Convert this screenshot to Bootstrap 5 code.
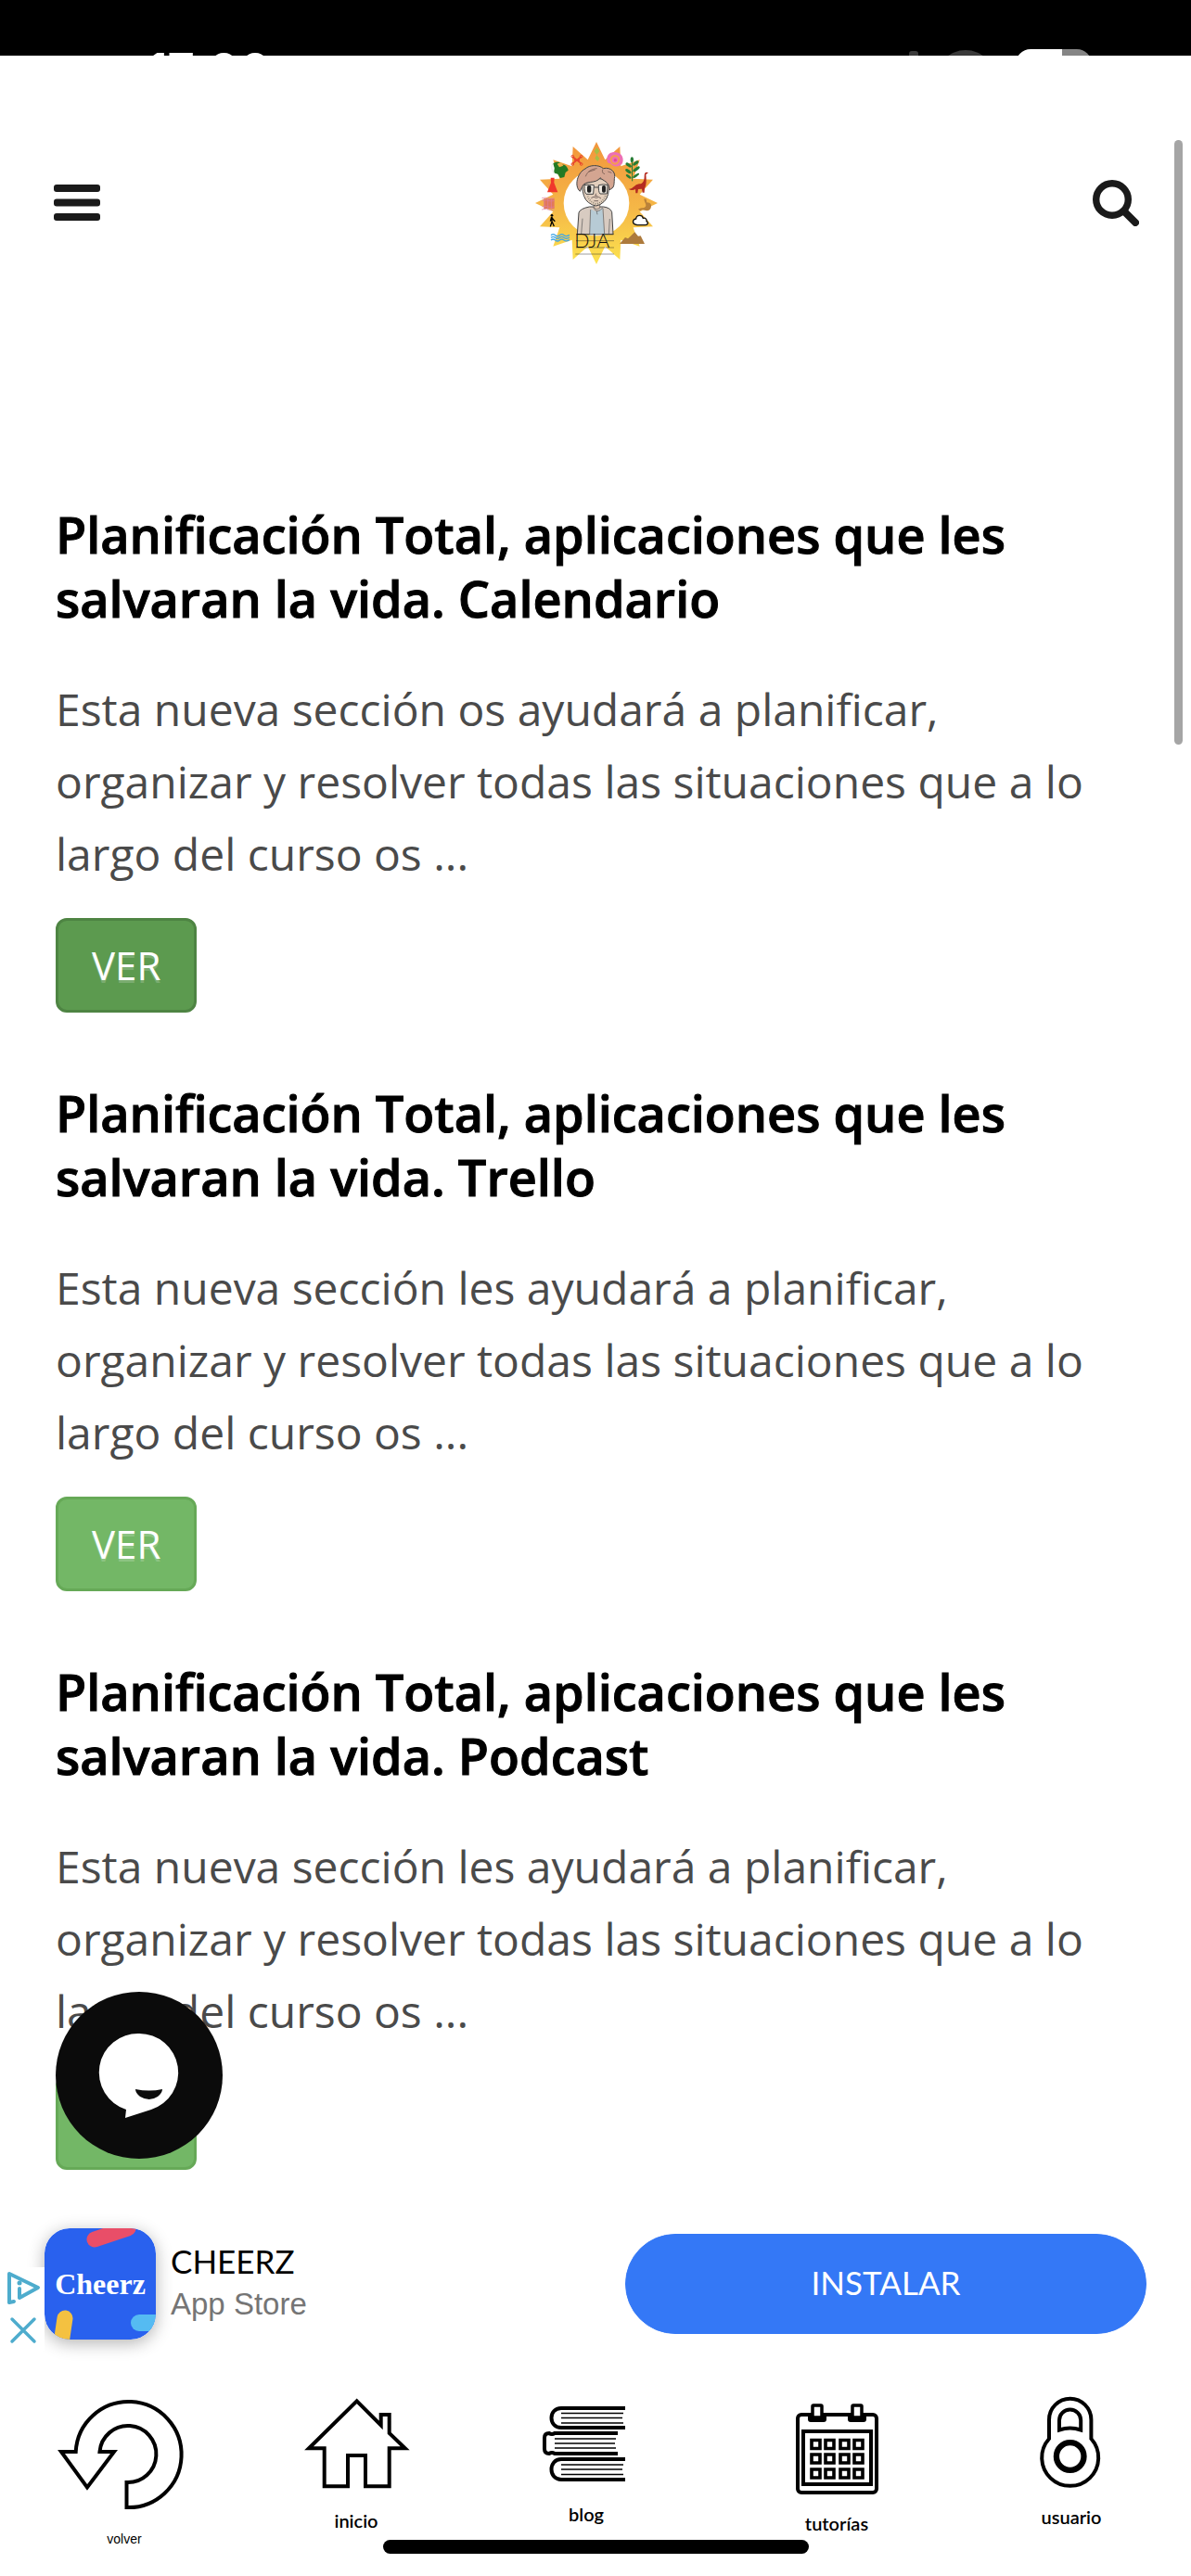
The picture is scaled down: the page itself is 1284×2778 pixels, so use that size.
<!DOCTYPE html>
<html lang="es">
<head>
<meta charset="utf-8">
<meta name="viewport" content="width=device-width, initial-scale=1">
<title>DJA - Planificación Total</title>
<link href="https://cdn.jsdelivr.net/npm/bootstrap@5.3.0/dist/css/bootstrap.min.css" rel="stylesheet">
<style>
  body { font-family: "Open Sans", "Noto Sans", sans-serif; background: #fff; color: #000; }
  svg { display: block; }
  .status-strip { height: 60px; background: #000; color: #fff; padding: 0 108px 0 159px; }
  .status-time { font-family: Inter, sans-serif; font-weight: 600; font-size: 51px; line-height: 60px; padding-top: 46px; }
  .site-header { padding: 93px 56px 93px 58px; }
  .scroll-thumb { position: fixed; top: 151px; right: 9px; width: 9px; height: 652px; border-radius: 5px; background: #a5a5a5; }
  .feed { padding: 164px 60px 45px; }
  .entry { margin-bottom: 74px; }
  .entry:last-child { margin-bottom: 0; }
  .entry-title { font-size: 54px; line-height: 69px; font-weight: 600; -webkit-text-stroke: 1px #000; margin-bottom: 46px; }
  .entry-text { font-size: 48px; line-height: 78px; color: #4a4a4a; margin-bottom: 30px; }
  .btn-ver {
    --bs-btn-color: #fff; --bs-btn-bg: #73b766; --bs-btn-border-color: #66a957;
    --bs-btn-hover-color: #fff; --bs-btn-hover-bg: #5c9a4f; --bs-btn-hover-border-color: #4e8443;
    --bs-btn-active-color: #fff; --bs-btn-active-bg: #5c9a4f; --bs-btn-active-border-color: #4e8443;
    --bs-btn-border-width: 3px; --bs-btn-border-radius: 12px;
    --bs-btn-padding-x: 36px; --bs-btn-padding-y: 18px;
    --bs-btn-font-size: 42px; --bs-btn-line-height: 60px;
    display: block; width: fit-content; text-shadow: 0 3px 0 rgba(255,255,255,.2);
  }
  .chat-bubble { position: fixed; left: 60px; bottom: 450px; width: 180px; height: 180px; border-radius: 50%; background: #0b0b0b; }
  .ad-strip { height: 150px; padding: 0 48px; }
  .ad-corner { position: absolute; left: 0; top: 57px; width: 48px; height: 90px; }
  .app-tile { border-radius: 27px; box-shadow: 0 4px 18px rgba(0,0,0,.3); }
  .app-name { font-family: Lato, sans-serif; font-size: 35px; line-height: 44px; }
  .app-store { font-family: "Liberation Sans", sans-serif; font-size: 33px; line-height: 50px; color: #757575; }
  .btn-install {
    --bs-btn-color: #fff; --bs-btn-bg: #3478f6; --bs-btn-border-color: #3478f6;
    --bs-btn-hover-color: #fff; --bs-btn-hover-bg: #2a68dc; --bs-btn-hover-border-color: #2a68dc;
    --bs-btn-padding-y: 0;
    font-family: Lato, sans-serif; font-size: 35px; width: 562px; height: 108px; padding-bottom: 4px;
  }
  .tab-row { display: grid; grid-template-columns: 268fr 232fr 264fr 276fr 230fr; padding: 42px 14px 28px 0; min-height: 240px; align-items: start; }
  .tab-link { color: #000; text-decoration: none; font-family: Lato, sans-serif; font-weight: 600; font-size: 20px; line-height: 24px; }
  .tab-small { font-family: "Liberation Sans", sans-serif; font-weight: 400; font-size: 14px; }
  .home-bar { position: fixed; left: 50%; bottom: 24px; width: 459px; height: 15px; margin-left: -229px; border-radius: 8px; background: #000; }
</style>
</head>
<body>
<div class="d-flex flex-column min-vh-100">
  <div class="status-strip d-flex justify-content-between overflow-hidden" aria-hidden="true">
    <span class="status-time">17:00</span>
    <svg width="200" height="60" viewBox="976 0 200 60">
      <rect x="980" y="55" width="10" height="20" rx="3" fill="#3a3a3a"/>
      <circle cx="1041" cy="86" r="32" fill="#3a3a3a"/>
      <path d="M1145 53h-34a16 16 0 0 0-16 16h50z" fill="#fff"/>
      <path d="M1145 53h16a16 16 0 0 1 16 16h-32z" fill="#858585"/>
    </svg>
  </div>

  <header class="site-header d-flex align-items-center justify-content-between">
    <button type="button" class="btn p-0 border-0" aria-label="Menú">
      <svg width="50" height="40" viewBox="0 0 50 40" fill="#1a1a1a"><rect width="50" height="8" rx="3"/><rect y="15.500" width="50" height="8" rx="3"/><rect y="31" width="50" height="8" rx="3"/></svg>
    </button>
    <a href="#" aria-label="DJA">
      <svg width="132" height="132" viewBox="48 38 396 396">
        <defs><linearGradient id="sol" x1="0" y1="0" x2="0" y2="1"><stop offset="0" stop-color="#f2953c"/><stop offset=".55" stop-color="#f5b847"/><stop offset="1" stop-color="#fce34f"/></linearGradient></defs>
        <path fill="url(#sol)" d="M246 38L274 96 322 53 325 117 386 96 365 157 429 160 386 208 444 236 386 264 429 312 365 315 386 376 325 355 322 419 274 376 246 434 218 376 170 419 167 355 106 376 127 315 63 312 106 264 48 236 106 208 63 160 127 157 106 96 167 117 170 53 218 96Z"/>
        <circle cx="246" cy="236" r="106" fill="#fff"/>
        <path d="M247 56l9 12-9 12 9 12-6 9-9-9 6-12-8-12z" fill="#a7bd45"/>
        <path d="M169 86l28 22M197 86l-28 22M174 97h18" stroke="#e8452e" stroke-width="5" fill="none"/><g fill="none" stroke="#e8452e" stroke-width="3"><circle cx="169" cy="85" r="4"/><circle cx="197" cy="85" r="4"/><circle cx="169" cy="110" r="4"/><circle cx="197" cy="110" r="4"/></g>
        <path d="M280 91c2-19 22-23 36-18 16 5 20 25 12 37-12 12-30 8-36-2-10 0-13-7-12-17z" fill="#ed70b4"/><circle cx="306" cy="96" r="13" fill="none" stroke="#f49c50" stroke-width="6"/><circle cx="307" cy="97" r="5" fill="#e6439b"/>
        <path d="M106 108c15-9 28-3 27 4 12-3 20 8 22 18l-9 7-4 15-13 3-8-13-10-3c-5-8 2-14-2-20z" fill="#247a24"/><path d="M119 109l12-5 8 11-13 5z" fill="#efb04a"/><path d="M104 109c-6 14 1 29 7 32" fill="none" stroke="#ddd" stroke-width="2"/>
        <path d="M362 165c-1-25 0-48-1-70" stroke="#277d35" stroke-width="3"/><g fill="#277d35"><ellipse cx="361" cy="96" rx="5" ry="9"/><ellipse cx="350" cy="113" rx="11" ry="5" transform="rotate(35 350 113)"/><ellipse cx="373" cy="107" rx="11" ry="5" transform="rotate(-35 373 107)"/><ellipse cx="349" cy="133" rx="11" ry="5" transform="rotate(35 349 133)"/><ellipse cx="375" cy="126" rx="13" ry="5" transform="rotate(-35 375 126)"/><ellipse cx="350" cy="150" rx="10" ry="4" transform="rotate(35 350 150)"/><ellipse cx="374" cy="147" rx="12" ry="4" transform="rotate(-35 374 147)"/></g>
        <path d="M350 190c14 2 19-14 34-16 14 0 17-12 17-25 0-12 5-15 13-11l-8 6c2 18 2 35-4 44l-1 14h-6l-2-12-12 1-2 13h-6l-1-13c-7 5-16 4-22-1z" fill="#b52c20"/>
        <path d="M98 154h12l-1 16 12 31H87l12-31z" fill="#f0382c"/><path d="M94 172l-5 12" stroke="#f78b6d" stroke-width="2"/>
        <rect x="76" y="222" width="34" height="32" fill="#e2785a"/><path d="M69 220c22-5 19 5 41 0M69 228c22-5 19 5 41 0M69 248c22-5 19 5 41 0M69 257c22-5 19 5 41 0M78 220v37M89 220v37M100 220v37" stroke="#dd81a5" stroke-width="2" fill="none"/>
        <path d="M400 222l7 1 2 11c14 0 17 10 12 20-6 10-18 6-26 3l-7 4-7-5c10-8 23-1 25-12 0-7-6-13-6-22z" fill="#ba8239"/>
        <circle cx="102" cy="276" r="4"/><path d="M101 281l6 9 5 5M101 281l-4 14M102 282v14l-5 16M102 295l7 16" stroke="#000" stroke-width="4" fill="none"/>
        <path d="M371 305c-10-4-8-17 3-18 1-14 20-14 23-2 8-2 13 5 11 10 9 6 2 12-5 12h-25z" fill="#fff" stroke="#111" stroke-width="4"/>
        <path d="M99 340q7-6 14 0t14 0 14 0 18-1M99 348q7-6 14 0t14 0 14 0 18-1M99 356q7-6 14 0t14 0 14 0 18-1" fill="none" stroke="#43a7e6" stroke-width="4"/>
        <path d="M321 368l18-21 9 4 22-21 11 13 8-1 13 26z" fill="#ad7a3c"/>
        <path d="M184 337l5-70q4-13 34-19h46q22 3 27 17l4 72z" fill="#d8cbc1" stroke="#444" stroke-width="3"/>
        <path d="M224 337l4-82q20 18 37-4l7 86z" fill="#b7cbd5"/><path d="M224 337l3-80M272 337l-5-84M236 250q8 14 13 12 9 0 17-11M197 336l4-50M286 336l3-49M247 263l2 10" fill="none" stroke="#555" stroke-width="2"/>
        <path d="M238 232v20q10 8 19 0v-20z" fill="#dfc6b3" stroke="#555" stroke-width="2"/>
        <path d="M200 178q1 42 20 56 12 9 24 11 14-1 27-14 18-16 15-62-22-17-48-10z" fill="#e3cfbd" stroke="#444" stroke-width="3"/>
        <path d="M193 198c-20-16-9-61 17-73 13-13 44-14 58-1 27-6 42 15 36 33-1 25-1 29-16 36-1-28-20-28-30-39-13 22-49 6-58 29z" fill="#d4a591" stroke="#444" stroke-width="3"/>
        <path d="M211 150c6-17 20-25 37-26M220 135l22-7M266 127q-3 13 7 15M283 134l12 4" fill="none" stroke="#624a43" stroke-width="2"/>
        <path d="M207 178q17-4 31 0l-2 29h-23q-7-5-6-29zM253 178q15-4 29-1l-2 29h-22q-6-6-5-28zM238 185h15" fill="#eee8df" stroke="#444" stroke-width="3"/>
        <rect x="216" y="179" width="13" height="23" rx="5" fill="#222"/><rect x="264" y="179" width="12" height="23" rx="5" fill="#222"/>
        <path d="M218 214q5 17 27 25 22-5 30-26" fill="none" stroke="#665" stroke-width="5" stroke-dasharray="2 5"/><path d="M229 220q8-8 16-1 9-6 16 2M238 229h14M245 205l-3 8h8" fill="none" stroke="#433" stroke-width="2"/>
        <path d="M180 337h123M180 358h123M180 380h123M178 401h125" stroke="#222" stroke-width="2" opacity=".65"/>
        <text x="175" y="380" font-family="Lato, sans-serif" font-weight="300" font-size="64" fill="#111">DJA</text>
      </svg>
    </a>
    <button type="button" class="btn p-0 border-0" aria-label="Buscar">
      <svg width="50" height="50" viewBox="0 0 50 50" fill="none" stroke="#1a1a1a"><circle cx="21" cy="21" r="17.300" stroke-width="7.400"/><path d="M34 34l12 12" stroke-width="8" stroke-linecap="round"/></svg>
    </button>
  </header>

  <main class="feed">
    <article class="entry">
      <h2 class="entry-title">Planificación Total, aplicaciones que les salvaran la vida. Calendario</h2>
      <p class="entry-text">Esta nueva sección os ayudará a planificar, organizar y resolver todas las situaciones que a lo largo del curso os ...</p>
      <a href="#" class="btn btn-ver active">VER</a>
    </article>
    <article class="entry">
      <h2 class="entry-title">Planificación Total, aplicaciones que les salvaran la vida. Trello</h2>
      <p class="entry-text">Esta nueva sección les ayudará a planificar, organizar y resolver todas las situaciones que a lo largo del curso os ...</p>
      <a href="#" class="btn btn-ver">VER</a>
    </article>
    <article class="entry">
      <h2 class="entry-title">Planificación Total, aplicaciones que les salvaran la vida. Podcast</h2>
      <p class="entry-text">Esta nueva sección les ayudará a planificar, organizar y resolver todas las situaciones que a lo largo del curso os ...</p>
      <a href="#" class="btn btn-ver">VER</a>
    </article>
  </main>

  <footer class="mt-auto bg-white">
    <aside class="ad-strip position-relative d-flex align-items-center" aria-label="Anuncio">
      <div class="ad-corner bg-white">
        <svg width="48" height="90" viewBox="0 0 48 90" fill="none" stroke="#4eaccd" stroke-width="4" stroke-linecap="round" stroke-linejoin="round">
          <path d="M15 37l-5 1V7l31 15-20 11V23"/><circle cx="21" cy="17" r="2.500" fill="#4eaccd" stroke="none"/><path d="M13 56l24 24M37 56L13 80" stroke-width="3.500"/>
        </svg>
      </div>
      <svg class="app-tile flex-shrink-0" width="120" height="120" viewBox="0 0 120 120">
        <defs><clipPath id="tile"><rect width="120" height="120" rx="27"/></clipPath></defs>
        <g clip-path="url(#tile)">
          <rect width="120" height="120" fill="#2961ee"/>
          <path d="M54 12L90 0" stroke="#e94e68" stroke-width="17" stroke-linecap="round"/>
          <path d="M22 97L18 124" stroke="#f4c141" stroke-width="17" stroke-linecap="round"/>
          <path d="M102 102h30" stroke="#55bbf2" stroke-width="18" stroke-linecap="round"/>
        </g>
        <text x="60" y="71" text-anchor="middle" font-family="'Liberation Serif', serif" font-weight="700" font-size="32" fill="#fff">Cheerz</text>
      </svg>
      <div class="ms-3 flex-grow-1">
        <div class="app-name">CHEERZ</div>
        <div class="app-store">App Store</div>
      </div>
      <button type="button" class="btn btn-install rounded-pill">INSTALAR</button>
    </aside>

    <nav class="tab-row" aria-label="Principal">
      <a href="#" class="tab-link tab-small d-flex flex-column align-items-center">
        <svg width="160" height="146" viewBox="0 0 160 146" fill="none" stroke="#000" stroke-width="4"><path d="M27.700 64H12l28 38.500L69 64H53.500A30.500 30.500 0 1 1 82.500 97V124A57 57 0 1 0 27.700 64z"/></svg>volver
      </a>
      <a href="#" class="tab-link d-flex flex-column align-items-center">
        <svg width="160" height="126" viewBox="0 0 160 126" fill="none" stroke="#000" stroke-width="4"><path d="M80.700 9.300l26 26V24h9v20l17 16.300h-17v41H90V68H71v33.300H45.700v-41H29z"/></svg>inicio
      </a>
      <a href="#" class="tab-link d-flex flex-column align-items-center">
        <svg width="160" height="119" viewBox="0 0 160 119" fill="none" stroke="#000" stroke-width="4"><path d="M122 17H53c-14 0-14 21 0 21h69M114 44H46q-3 2-6 0-5 0-5 5v12q0 5 5 5 3-2 6 0h68M122 72H53c-14 0-14 22 0 22h69"/><path d="M53 22.500h67M53 27.500h66M53 33h67M46 50h66M46 55h65M46 60h66M53 78h67M53 83h66M53 88.500h67" stroke-width="1.300"/></svg>blog
      </a>
      <a href="#" class="tab-link d-flex flex-column align-items-center">
        <svg width="160" height="129" viewBox="0 0 160 129" fill="none" stroke="#000" stroke-width="4"><rect x="38" y="24" width="85" height="84" rx="4"/><rect x="44" y="42" width="73" height="57"/><path d="M49 25h20v4q0 3-3 3H52q-3 0-3-3zM92 25h20v4q0 3-3 3H95q-3 0-3-3z" fill="#000" stroke="none"/><g fill="#fff" stroke-width="3.500"><rect x="54" y="14" width="10" height="13" rx="1"/><rect x="97" y="14" width="10" height="13" rx="1"/></g>
          <g stroke-width="3.600"><path d="M53 51.500h9v9h-9zM68 51.500h9v9h-9zM84 51.500h9v9h-9zM99 51.500h9v9h-9zM53 67h9v9h-9zM68 67h9v9h-9zM84 67h9v9h-9zM99 67h9v9h-9zM53 83h9v9h-9zM68 83h9v9h-9zM84 83h9v9h-9zM99 83h9v9h-9z"/></g></svg>tutorías
      </a>
      <a href="#" class="tab-link d-flex flex-column align-items-center">
        <svg width="160" height="122" viewBox="0 0 160 122" fill="none" stroke="#000" stroke-width="4"><path d="M56 50V29.400a22.700 22.700 0 0 1 45.400 0V50A30.500 30.500 0 1 1 56 50z"/><path d="M67 40.500V30a11.600 11.600 0 0 1 23.200 0V40.500q-11.600-4-23.200 0z"/><circle cx="78.700" cy="69" r="14.800" stroke-width="6.300"/></svg>usuario
      </a>
    </nav>
  </footer>
</div>

<div class="scroll-thumb" aria-hidden="true"></div>
<button type="button" class="chat-bubble btn p-0 border-0" aria-label="Abrir chat">
  <svg width="180" height="180" viewBox="0 0 180 180"><path d="M90 45a42 42 0 0 0-14 82l-1 9 28-9A42 42 0 0 0 90 45z" fill="#fff"/><path d="M86 105q15 3 29 0 0 4-5 8-9 6-19 0-5-4-5-8z" fill="#0b0b0b"/></svg>
</button>
<div class="home-bar" aria-hidden="true"></div>
<script src="https://cdn.jsdelivr.net/npm/bootstrap@5.3.0/dist/js/bootstrap.bundle.min.js"></script>
</body>
</html>
